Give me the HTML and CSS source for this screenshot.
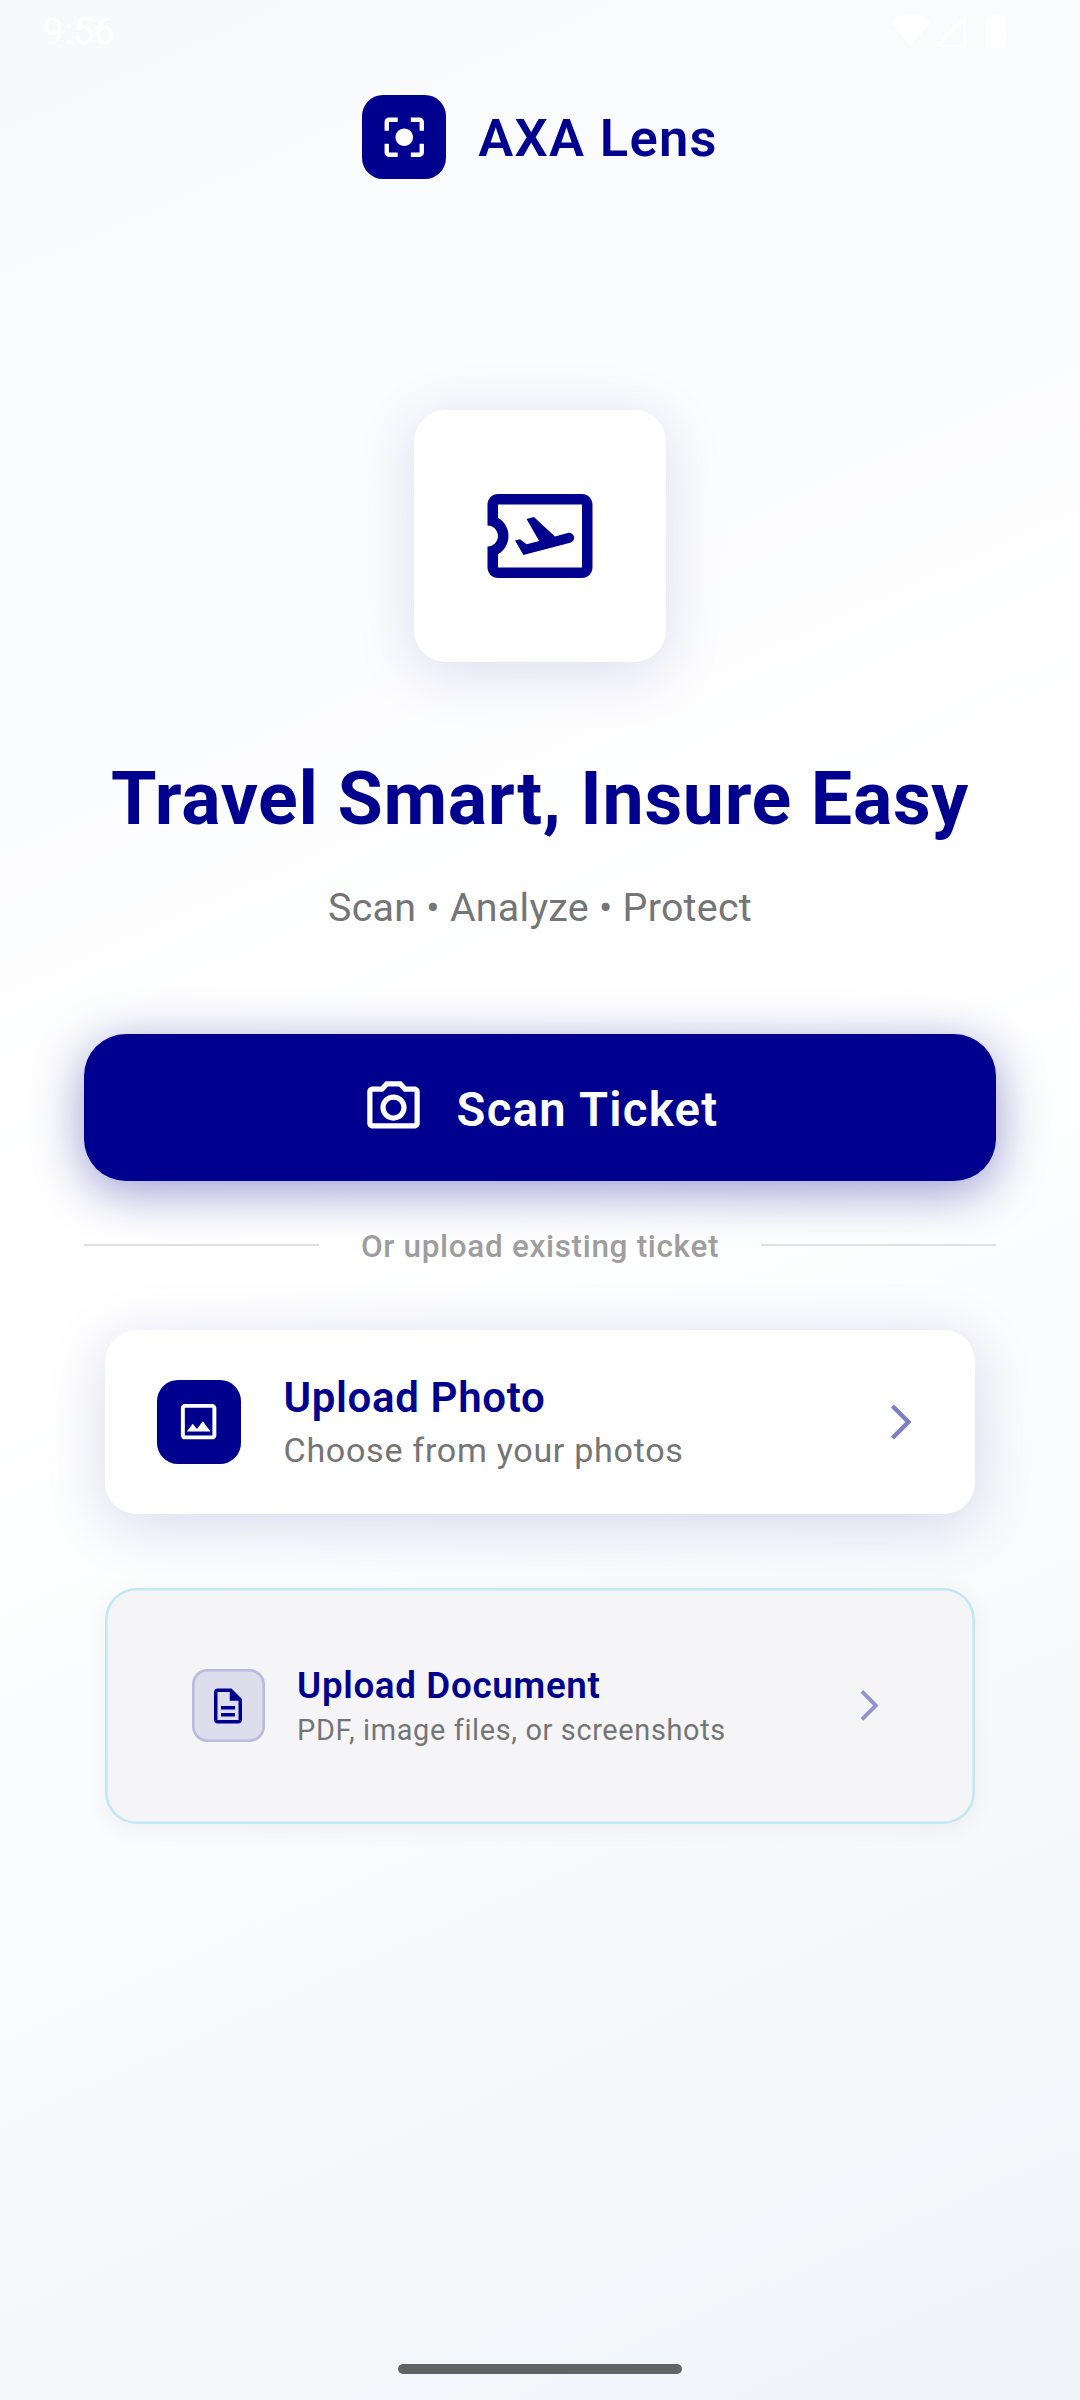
FILE: index.html
```html
<!DOCTYPE html>
<html lang="en">
<head>
<meta charset="utf-8">
<title>AXA Lens</title>
<link rel="stylesheet" href="styles.css">
</head>
<body>
<div class="screen">
  <div class="status-bar">
    <span class="clock">9:56</span>
    <svg class="status-icons" width="116" height="36" viewBox="0 0 116 36" fill="currentColor">
      <path d="M0 9.500C5 4 12 1.500 19.500 1.500S34 4 39 9.500L19.500 34z"/>
      <path fill-rule="evenodd" d="M75 2v32H43zM72 9.500V31H50.500z"/>
      <path d="M100 3.500V1h8v2.500h5a2 2 0 0 1 2 2V33a2 2 0 0 1-2 2H96a2 2 0 0 1-2-2V5.500a2 2 0 0 1 2-2z"/>
    </svg>
  </div>

  <header class="brand">
    <span class="tile brand-tile">
      <svg width="52.5" height="52.5" viewBox="0 0 24 24" fill="currentColor"><path d="M12 8c-2.210 0-4 1.790-4 4s1.790 4 4 4 4-1.790 4-4-1.790-4-4-4zm-7 7H3v4c0 1.100.9 2 2 2h4v-2H5v-4zM5 5h4V3H5c-1.100 0-2 .9-2 2v4h2V5zm14-2h-4v2h4v4h2V5c0-1.100-.9-2-2-2zm0 16h-4v2h4c1.100 0 2-.9 2-2v-4h-2v4z"/></svg>
    </span>
    <span class="brand-name">AXA Lens</span>
  </header>

  <main class="content">
    <div class="hero">
      <svg width="126" height="126" viewBox="0 0 24 24" fill="currentColor">
        <path fill-rule="evenodd" d="M4 4h16c1.100 0 2 .9 2 2v12c0 1.100-.9 2-2 2H4c-1.100 0-2-.9-2-2v-4c1.100 0 2-.9 2-2s-.9-2-2-2V6c0-1.100.9-2 2-2zM4 8.540c1.200.68 2 1.980 2 3.460s-.8 2.780-2 3.470V18h16V6H4z"/>
        <path d="M17.730 13.300 8.840 15.640l-1.600-2.780.96-.26 1.250.99 2.390-.64-2.400-4.200 1.400-.36 4.010 3.690 2.440-.65c.51-.14 1.040.17 1.180.68.130.51-.18 1.040-.74 1.190z"/>
      </svg>
    </div>
    <h1 class="headline">Travel Smart, Insure Easy</h1>
    <p class="tagline">Scan • Analyze • Protect</p>

    <button class="scan" type="button">
      <svg width="63" height="63" viewBox="0 0 24 24" fill="currentColor"><path d="M14.120 4l1.830 2H20v12H4V6h4.050l1.830-2h4.240M15 2H9L7.170 4H4c-1.100 0-2 .9-2 2v12c0 1.100.9 2 2 2h16c1.100 0 2-.9 2-2V6c0-1.100-.9-2-2-2h-3.170L15 2zm-3 7c1.650 0 3 1.350 3 3s-1.350 3-3 3-3-1.350-3-3 1.350-3 3-3m0-2c-2.760 0-5 2.240-5 5s2.240 5 5 5 5-2.240 5-5-2.240-5-5-5z"/></svg>
      <span class="scan-label">Scan Ticket</span>
    </button>

    <div class="separator"><span class="separator-label">Or upload existing ticket</span></div>

    <a class="card photo-card">
      <span class="tile">
        <svg width="47.25" height="47.25" viewBox="0 0 24 24" fill="currentColor"><path d="M19 5v14H5V5h14m0-2H5c-1.100 0-2 .9-2 2v14c0 1.100.9 2 2 2h14c1.100 0 2-.9 2-2V5c0-1.100-.9-2-2-2zm-4.860 8.860l-3 3.870L9 13.140 6 17h12l-3.860-5.140z"/></svg>
      </span>
      <span class="card-text">
        <span class="card-title">Upload Photo</span>
        <span class="card-note">Choose from your photos</span>
      </span>
      <svg class="chevron" width="42" height="42" viewBox="0 0 24 24" fill="currentColor"><path d="M6.230 20.230 8 22l10-10L8 2 6.230 3.770 14.460 12z"/></svg>
    </a>

    <a class="card document-card">
      <span class="tile">
        <svg width="42" height="42" viewBox="0 0 24 24" fill="currentColor"><path d="M8 16h8v2H8zm0-4h8v2H8zm6-10H6c-1.100 0-2 .9-2 2v16c0 1.100.89 2 1.990 2H18c1.100 0 2-.9 2-2V8l-6-6zm4 18H6V4h7v5h5v11z"/></svg>
      </span>
      <span class="card-text">
        <span class="card-title">Upload Document</span>
        <span class="card-note">PDF, image files, or screenshots</span>
      </span>
      <svg class="chevron" width="36.75" height="36.75" viewBox="0 0 24 24" fill="currentColor"><path d="M6.230 20.230 8 22l10-10L8 2 6.230 3.770 14.460 12z"/></svg>
    </a>
  </main>

  <div class="home-bar"></div>
</div>
</body>
</html>
```
FILE: styles.css
```css
* { box-sizing: border-box; }

body {
  margin: 0;
  font-family: Roboto, sans-serif;
  color: #00008f;
}

svg { display: block; flex: none; }

.screen {
  display: flex;
  flex-direction: column;
  align-items: center;
  width: 1080px;
  height: 2400px;
  padding-bottom: 26px;
  background: linear-gradient(155.77deg, #f8f9fc 0%, #fff 48%, #f0f4f8 100%);
}

.status-bar {
  display: flex;
  justify-content: space-between;
  align-items: flex-start;
  width: 100%;
  height: 95px;
  padding: 10px 73px 0 43px;
  color: #fff;
}

.clock { font-size: 36.75px; line-height: 43px; letter-spacing: 0.3px; }
.status-icons { margin-top: 3px; }

.brand { display: flex; align-items: center; gap: 32px; }

.brand-name {
  padding-top: 2px;
  font-size: 52.5px;
  font-weight: 600;
  line-height: 62px;
  letter-spacing: 1.3px;
}

.tile {
  display: flex;
  flex: none;
  align-items: center;
  justify-content: center;
  width: 84px;
  height: 84px;
  border-radius: 21px;
  background: #00008f;
  color: #fff;
}

.content {
  display: flex;
  flex-direction: column;
  align-items: center;
  width: 912px;
  margin-top: 231px;
}

.hero {
  display: flex;
  align-items: center;
  justify-content: center;
  width: 252px;
  height: 252px;
  border-radius: 31.5px;
  background: #fff;
  box-shadow: 0 10.5px 61px rgba(0, 0, 143, 0.13);
}

.headline {
  margin: 93px 0 0;
  font-size: 73.5px;
  font-weight: 700;
  line-height: 88px;
  letter-spacing: 0.67px;
  white-space: nowrap;
}

.tagline {
  margin: 42px 0 0;
  color: #757575;
  font-size: 39.4px;
  line-height: 46px;
  letter-spacing: 0.26px;
}

.scan {
  display: flex;
  align-items: center;
  justify-content: center;
  gap: 32px;
  width: 100%;
  height: 147px;
  margin-top: 103px;
  padding: 0;
  border: 0;
  border-radius: 42px;
  background: #00008f;
  box-shadow: 0 10.5px 49.5px rgba(0, 0, 143, 0.4);
  color: #fff;
  font-family: inherit;
}

.scan-label {
  padding-top: 4px;
  font-size: 47.25px;
  font-weight: 600;
  line-height: 56px;
  letter-spacing: 1.3px;
}

.separator {
  display: flex;
  align-items: center;
  gap: 42px;
  width: 100%;
  margin-top: 47px;
}

.separator::before,
.separator::after {
  content: "";
  flex: 1;
  height: 2px;
  margin-top: -4px;
  background: #e0e0e0;
}

.separator-label {
  color: #9e9e9e;
  font-size: 31.5px;
  font-weight: 500;
  line-height: 38px;
  letter-spacing: 0.67px;
}

.card {
  display: flex;
  align-items: center;
  width: 870px;
  border-radius: 31.5px;
}

.card-text { display: flex; flex: 1; flex-direction: column; }
.card-title { font-weight: 600; }
.card-note { color: #757575; }

.photo-card {
  gap: 42.5px;
  height: 184px;
  margin-top: 64px;
  padding: 0 53px 0 52px;
  background: #fff;
  box-shadow: 0 10.5px 61px rgba(0, 0, 143, 0.15);
}

.photo-card .card-text { gap: 8px; padding-bottom: 2px; }
.photo-card .card-title { font-size: 42px; line-height: 49px; letter-spacing: 0.65px; }
.photo-card .card-note { font-size: 34.1px; line-height: 40px; letter-spacing: 0.7px; }
.photo-card .chevron { opacity: 0.5; }

.document-card {
  gap: 32px;
  height: 236px;
  margin-top: 74px;
  padding: 0 87px 1px 86.6px;
  background: #f5f5f8;
  box-shadow: inset 0 0 0 2.6px #c2e8f5, 0 5px 25px rgba(0, 0, 0, 0.05);
}

.document-card .tile {
  width: 73.5px;
  height: 73.5px;
  border-radius: 15.75px;
  background: #ddddec;
  box-shadow: inset 0 0 0 2.6px #bbbbdf;
  color: #00008f;
}

.document-card .card-text { gap: 6px; }
.document-card .card-title { font-size: 36.75px; line-height: 43px; letter-spacing: 0.65px; }
.document-card .card-note { font-size: 28.9px; line-height: 34px; letter-spacing: 0.65px; }
.document-card .chevron { opacity: 0.4; }

.home-bar {
  width: 284px;
  height: 10px;
  margin-top: auto;
  border-radius: 5px;
  background: #616365;
}
```
